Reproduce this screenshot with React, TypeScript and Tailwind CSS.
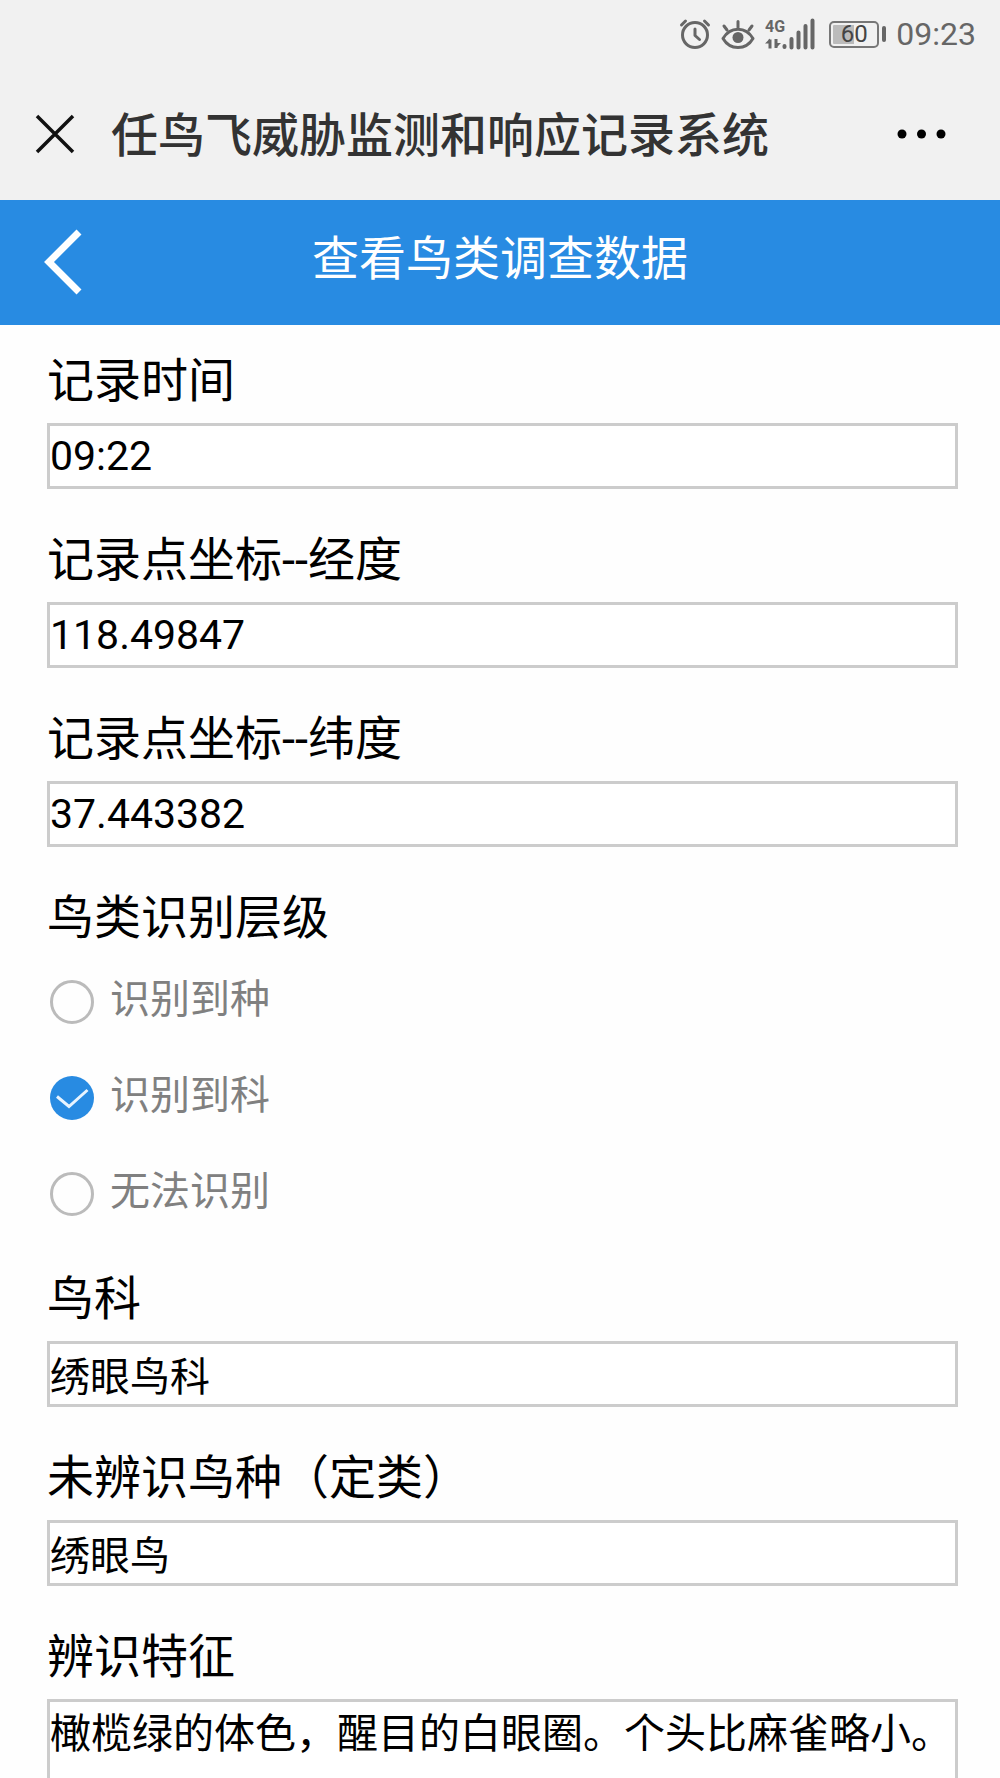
import React, { useState } from 'react';

interface TextFieldProps {
    id: string;
    label: string;
    value: string;
    numeric?: boolean;
    onChange: (value: string) => void;
}

const LEVEL_OPTIONS = ['识别到种', '识别到科', '无法识别'];

const AlarmIcon = () => (
    <svg className="w-8 h-8" viewBox="0 0 32 32" fill="none" stroke="#666" strokeWidth="3" strokeLinecap="round" aria-hidden="true">
        <circle cx="16" cy="17" r="12.5" />
        <path d="M16 11v6.5l4.5 4" strokeLinejoin="round" />
        <path d="M2.5 7l4-4M29.5 7l-4-4" />
    </svg>
);

const EyeIcon = () => (
    <svg className="w-[34px] h-8" viewBox="0 0 34 32" fill="none" stroke="#666" strokeWidth="3" strokeLinecap="round" aria-hidden="true">
        <path d="M2 20.5C9 8 25 8 32 20.5C25 32.5 9 32.5 2 20.5Z" strokeLinejoin="round" />
        <circle cx="17" cy="19.5" r="5.5" fill="#666" stroke="none" />
        <path d="M17 3.5v6M3 8l3 4M31 8l-3 4" />
    </svg>
);

const SignalIcon = () => (
    <svg className="w-[50px] h-8" viewBox="0 0 50 32" fill="none" stroke="#666" aria-hidden="true">
        <text x="0" y="14" fill="#666" stroke="none" className="text-[16px] font-bold font-[Roboto,sans-serif]">4G</text>
        <path d="M5 30.5v-9M11 21v9" strokeWidth="3" />
        <path d="M5 20.5l-5 5h5zM11 30l5-5h-5z" fill="#666" stroke="none" />
        <path d="M19.500 28v1M26.500 21v8.500M33.500 14.500v15M40.500 8v21.500M47.500 2.500v27" strokeWidth="4" strokeLinecap="round" />
    </svg>
);

const StatusBar = () => (
    <div className="flex h-[68px] items-center justify-end pr-6 text-[#666]">
        <AlarmIcon />
        <span className="ml-2.5"><EyeIcon /></span>
        <span className="ml-2.5"><SignalIcon /></span>
        <div className="ml-3.5 flex items-center gap-[3px]" aria-label="电量 60%">
            <div className="flex h-[27px] w-[50px] items-center justify-center rounded-[5px] border-2 border-[#777] bg-linear-to-r from-[#bbb] from-50% to-transparent to-50% bg-clip-content p-0.5 text-2xl leading-none text-[#444]">
                60
            </div>
            <div className="h-4 w-1 rounded-sm bg-[#666]" />
        </div>
        <span className="ml-2.5 text-[32px] leading-none">09:23</span>
    </div>
);

const TextField: React.FC<TextFieldProps> = ({ id, label, value, numeric, onChange }) => (
    <div>
        <label htmlFor={id} className="mb-3.5 block text-[47px] leading-[56px]">{label}</label>
        <input
            id={id}
            type="text"
            className={`block h-[66px] w-full border-[3px] border-[#ccc] bg-white p-0 outline-none ${numeric ? 'text-[41px]' : 'text-[40px]'}`}
            value={value}
            onChange={e => onChange(e.target.value)}
        />
    </div>
);

export default function App() {
    const [record, setRecord] = useState({
        time: '09:22',
        longitude: '118.49847',
        latitude: '37.443382',
        level: '识别到科',
        family: '绣眼鸟科',
        species: '绣眼鸟',
        features: '橄榄绿的体色，醒目的白眼圈。个头比麻雀略小。'
    });

    const update = (key: keyof typeof record) => (value: string) =>
        setRecord(prev => ({ ...prev, [key]: value }));

    return (
        <div className="flex h-screen flex-col bg-[#fefefe] font-[Roboto,'Noto_Sans_CJK_SC',sans-serif] text-black" lang="zh-CN">
            <header className="shrink-0 bg-[#f1f1f1]">
                <StatusBar />
                <div className="flex h-[132px] items-center pr-[52px] pl-[35px]">
                    <button type="button" aria-label="关闭">
                        <svg className="h-10 w-10" viewBox="0 0 40 40" fill="none" stroke="#111" strokeWidth="3.500" aria-hidden="true">
                            <path d="M2 2l36 36M38 2L2 38" />
                        </svg>
                    </button>
                    <h1 className="ml-9 flex-1 pt-1 text-[47px] leading-[56px] font-medium whitespace-nowrap text-[#333]">任鸟飞威胁监测和响应记录系统</h1>
                    <button type="button" aria-label="更多">
                        <svg className="h-3 w-[52px]" viewBox="0 0 52 12" aria-hidden="true">
                            <circle cx="6" cy="6" r="4.500" />
                            <circle cx="25.500" cy="6" r="4.500" />
                            <circle cx="45" cy="6" r="4.500" />
                        </svg>
                    </button>
                </div>
            </header>

            <nav className="grid h-[125px] shrink-0 grid-cols-[1fr_auto_1fr] items-center bg-[#288be2] px-10 text-white">
                <button type="button" aria-label="返回" className="justify-self-start pb-0.5">
                    <svg className="h-[68px] w-11" viewBox="0 0 44 68" fill="none" stroke="currentColor" strokeWidth="7" aria-hidden="true">
                        <path d="M39 4L9 34l30 30" />
                    </svg>
                </button>
                <h2 className="pb-2 text-[47px] leading-[56px] font-normal">查看鸟类调查数据</h2>
            </nav>

            <form className="flex-1 overflow-y-auto px-[42px] pt-7 [scrollbar-width:none]" onSubmit={e => e.preventDefault()}>
                <div className="flex flex-col gap-[43px] pl-[5px]">
                    <TextField id="time" label="记录时间" value={record.time} numeric onChange={update('time')} />
                    <TextField id="longitude" label="记录点坐标--经度" value={record.longitude} numeric onChange={update('longitude')} />
                    <TextField id="latitude" label="记录点坐标--纬度" value={record.latitude} numeric onChange={update('latitude')} />

                    <fieldset className="-mb-3.5">
                        <legend className="mb-2 block text-[47px] leading-[56px]">鸟类识别层级</legend>
                        {LEVEL_OPTIONS.map(option => (
                            <label key={option} className="flex h-24 items-center gap-4 pl-[3px] text-[40px] text-[#808080]">
                                <input
                                    type="radio"
                                    name="level"
                                    className="peer sr-only"
                                    checked={record.level === option}
                                    onChange={() => update('level')(option)}
                                />
                                {record.level === option ? (
                                    <svg className="h-11 w-11" viewBox="0 0 44 44" fill="none" aria-hidden="true">
                                        <circle cx="22" cy="22" r="22" fill="#288be2" />
                                        <path d="M7 20.500l12 10 18.500-16.500" stroke="#e8f4ff" strokeWidth="3" />
                                    </svg>
                                ) : (
                                    <span className="h-11 w-11 rounded-full border-[3px] border-[#bbb]" />
                                )}
                                <span className="pb-1 leading-[56px]">{option}</span>
                            </label>
                        ))}
                    </fieldset>

                    <TextField id="family" label="鸟科" value={record.family} onChange={update('family')} />
                    <TextField id="species" label="未辨识鸟种（定类）" value={record.species} onChange={update('species')} />

                    <div>
                        <label htmlFor="features" className="mb-3.5 block text-[47px] leading-[56px]">辨识特征</label>
                        <textarea
                            id="features"
                            rows={3}
                            className="block w-full resize-none border-[3px] border-[#ccc] bg-white p-0 pt-1 text-[41px] leading-[56px] outline-none"
                            value={record.features}
                            onChange={e => update('features')(e.target.value)}
                        />
                    </div>
                </div>
            </form>
        </div>
    );
}
